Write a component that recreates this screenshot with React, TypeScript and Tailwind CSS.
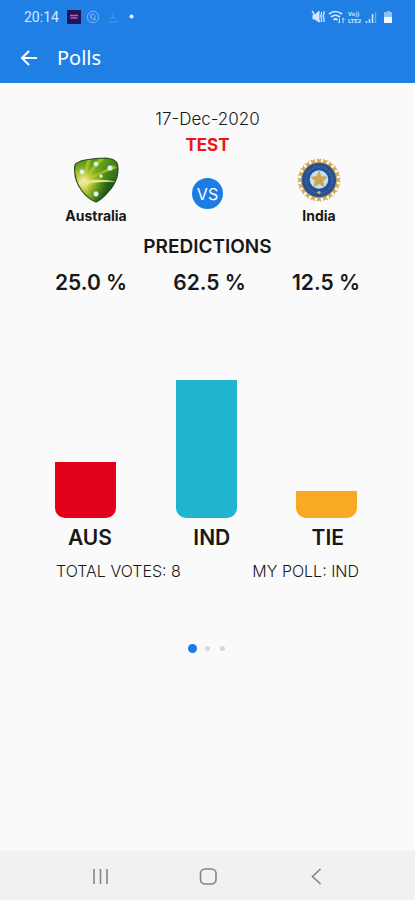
const results = [
  { team: "AUS", percent: "25.0 %", bar: "h-14 bg-[#e2001a]" },
  { team: "IND", percent: "62.5 %", bar: "h-[138px] bg-[#20b4ce]" },
  { team: "TIE", percent: "12.5 %", bar: "h-[27px] bg-[#f8aa24]" },
];

function AustraliaLogo() {
  return (
    <svg viewBox="0 0 44 46" className="h-[46px] w-[46px]" aria-hidden="true">
      <defs>
        <linearGradient id="shield" x1="0" y1="0.2" x2="1" y2="0.8">
          <stop offset="0" stopColor="#3f8a17" />
          <stop offset="0.45" stopColor="#5f9e16" />
          <stop offset="1" stopColor="#145019" />
        </linearGradient>
        <radialGradient id="glow" cx="0.22" cy="0.54" r="0.55">
          <stop offset="0" stopColor="#fffbd0" />
          <stop offset="0.35" stopColor="#d3d640" stopOpacity="0.8" />
          <stop offset="1" stopColor="#7fae1c" stopOpacity="0" />
        </radialGradient>
        <clipPath id="shieldClip">
          <path d="M1 8Q2 5 11 3Q22 1 32 1Q41 2 43 6Q45 12 43 20Q40 29 34 35Q28 42 22 45Q14 42 8 34Q-1 22 1 8Z" />
        </clipPath>
      </defs>
      <g clipPath="url(#shieldClip)">
        <path fill="url(#shield)" d="M0 0h44v46H0z" />
        <path fill="#c5d22f" opacity=".65" d="M9 24 13 1l5 0ZM9 24 26 0l5 1ZM9 24 40 8l3 3ZM9 24 0 10v4Z" />
        <path fill="#174f14" opacity=".6" d="M12 28q16-4 32-2v20H23Z" />
        <path fill="url(#glow)" d="M0 0h44v46H0z" />
        <path fill="#e7e88a" d="M1 26Q20 20 44 25Q20 24 3 29Z" />
      </g>
      <path fill="none" stroke="#294c22" strokeWidth="1.2" d="M1 8Q2 5 11 3Q22 1 32 1Q41 2 43 6Q45 12 43 20Q40 29 34 35Q28 42 22 45Q14 42 8 34Q-1 22 1 8Z" />
      <g fill="#e4f8ee" stroke="#a4d8b9" strokeWidth=".6">
        <circle cx="22" cy="7" r="2.3" />
        <circle cx="8" cy="15" r="2.4" />
        <circle cx="36" cy="11" r="2.5" />
        <circle cx="27" cy="19" r="1.5" />
        <circle cx="22" cy="37" r="2.4" />
      </g>
    </svg>
  );
}

function IndiaLogo() {
  const rays = Array.from({ length: 20 }, (_, i) => i * 18);
  return (
    <svg viewBox="0 0 46 46" className="h-[46px] w-[46px]" aria-hidden="true">
      {rays.map((angle) => (
        <path key={angle} transform={`rotate(${angle} 23 23)`} d="M20 7 21.5 4 20.5 1 23 2.5 26 1.5 24.5 4 26 7Z" fill="#d5a750" />
      ))}
      <circle cx="23" cy="23" r="17.5" fill="#294f91" stroke="#c8a35e" strokeWidth=".7" />
      <circle cx="23" cy="23" r="13.3" fill="none" stroke="#4b6ba3" strokeWidth="2" strokeDasharray="1 1.5" />
      <circle cx="23" cy="22.5" r="9.3" fill="#b8e7ef" />
      <path fill="#d2a353" stroke="#d2a353" strokeLinejoin="round" d="m23 14.5 2.2 5.2 5.6.5-4.2 3.7 1.2 5.5-4.8-2.9-4.8 2.9 1.2-5.5-4.2-3.7 5.6-.5Z" />
      <circle cx="23" cy="35.5" r="1.6" fill="#d8ae62" />
    </svg>
  );
}

function StatusBar() {
  return (
    <div className="flex h-[33px] items-center justify-between pl-6 pr-[22px] text-[#d4e8fb]">
      <div className="flex items-center">
        <span className="w-[37px] font-['Roboto',sans-serif] text-sm leading-5">20:14</span>
        <svg viewBox="0 0 72 16" className="ml-[6px] h-4 w-[72px]" fill="none" aria-hidden="true">
          <path fill="#231456" d="M0 1h14v14H0z" />
          <path stroke="#c05bbf" strokeWidth="1.5" d="M3 6.5h8M3.5 9h7" />
          <g stroke="#75b5f2">
            <circle cx="26" cy="8" r="5.7" />
            <path d="M23 5.5c1 4 3 5 6 5M24 9.5V6l2-1.5L28 7v2l-2 2.5" />
          </g>
          <path stroke="#479cec" d="M41 13h10M43 10l3-2V4m0 4 3 2" />
          <circle cx="64.5" cy="7.5" r="2" fill="#eff8ff" />
        </svg>
      </div>
      <svg viewBox="0 0 82 16" className="h-4 w-[82px]" fill="none" aria-hidden="true">
        <g stroke="currentColor">
          <path fill="currentColor" d="M2 6h2l4-4v11L4 10H2Z" />
          <path d="m1 2 8 11M10.500 3v2l-1 2 1 2v4M13 2v3l-1 2 1 2v4" strokeWidth="1.3" />
          <path d="M18 5q6-5 13 0M20 8q4-3.500 9 0M22.500 11q2-2 4 0" strokeWidth="1.7" />
          <path d="M28.500 14V9.500m0 4.500-1.500-1.500M32 9v5m0-5 1.500 1.500" />
        </g>
        <g fontSize="6" fontWeight="700" fill="currentColor" className="font-['Roboto',sans-serif]">
          <text x="37" y="7">Vo))</text>
          <text x="37" y="14">LTE2</text>
        </g>
        <path stroke="currentColor" strokeWidth="1.5" d="M55.500 14v-2m3 2v-4m3 4V5" />
        <path stroke="#64aaf0" strokeWidth="1.5" d="M64.500 14V3" />
        <path fill="#8dc1f3" d="M75 3h1V2h3v1h2v5h-8V3Z" />
        <path fill="#eff8ff" d="M73 8h8v6h-8Z" />
      </svg>
    </div>
  );
}

function NavBar() {
  return (
    <nav className="flex h-[49px] items-center justify-between bg-[#f1f1f1] px-[89px] text-[#858585]">
      <button type="button" aria-label="Recent apps">
        <svg viewBox="0 0 22 22" className="size-[22px]" stroke="currentColor" strokeWidth="1.6" fill="none">
          <path d="M5 4v15M11.500 4v15M18 4v15" />
        </svg>
      </button>
      <button type="button" aria-label="Home">
        <svg viewBox="0 0 22 22" className="size-[22px]" stroke="currentColor" strokeWidth="1.6" fill="none">
          <rect x="3.5" y="4" width="15.500" height="15" rx="4.500" />
        </svg>
      </button>
      <button type="button" aria-label="Back">
        <svg viewBox="0 0 22 22" className="size-[22px]" stroke="currentColor" strokeWidth="1.7" fill="none">
          <path d="m16.500 4-8 7.500 8 7.500" />
        </svg>
      </button>
    </nav>
  );
}

export default function App() {
  return (
    <div className="flex min-h-screen flex-col bg-[#fafafa] font-['Inter',sans-serif] text-[#181818]">
      <header className="bg-[#1f7fe5] text-white">
        <StatusBar />
        <div className="flex h-[50px] items-center pl-5">
          <button type="button" aria-label="Go back">
            <svg viewBox="0 0 18 18" className="size-[18px]" stroke="currentColor" strokeWidth="2" fill="none">
              <path d="M17 9H2m7-7L2 9l7 7" />
            </svg>
          </button>
          <h1 className="ml-[19px] font-['Noto_Sans',sans-serif] text-xl leading-6">Polls</h1>
        </div>
      </header>

      <main className="flex-1 pt-6">
        <div className="text-center">
          <p className="text-[17px] font-light leading-6">17-Dec-2020</p>
          <p className="mt-[2px] text-[17px] font-bold leading-6 text-[#ed1515]">TEST</p>
        </div>
        <div className="flex justify-between px-[65px]">
          <div className="flex w-[62px] flex-col items-center">
            <AustraliaLogo />
            <span className="mt-[3px] text-sm font-bold leading-5">Australia</span>
          </div>
          <div className="mt-[21px] flex size-[31px] items-center justify-center rounded-full bg-[#1b7ce5] text-base text-white">VS</div>
          <div className="flex w-[62px] flex-col items-center">
            <IndiaLogo />
            <span className="mt-[3px] text-sm font-bold leading-5">India</span>
          </div>
        </div>

        <h2 className="mt-[9px] text-center text-[19px] font-semibold leading-6">PREDICTIONS</h2>
        <div className="mt-3 flex justify-between px-[55px] text-[21px] font-semibold leading-6">
          {results.map(({ team, percent }) => (
            <span key={team}>{percent}</span>
          ))}
        </div>
        <div className="mt-[85px] flex h-[138px] items-end justify-between pl-[55px] pr-[58px]">
          {results.map(({ team, bar }) => (
            <div key={team} className={`w-[61px] rounded-b-[10px] ${bar}`} />
          ))}
        </div>
        <div className="mt-2 flex justify-between pl-[68px] pr-[71px] text-[21px] font-semibold leading-6">
          {results.map(({ team }) => (
            <span key={team}>{team}</span>
          ))}
        </div>
        <div className="mt-[9px] flex justify-between px-[56px] text-base font-light leading-6">
          <span>TOTAL VOTES: 8</span>
          <span>MY POLL: IND</span>
        </div>

        <div className="mt-[58px] flex justify-center">
          <button type="button" aria-label="Poll 1" className="flex size-[15px] items-center justify-center">
            <span className="size-[9px] rounded-full bg-[#1b7ce5]" />
          </button>
          <button type="button" aria-label="Poll 2" className="flex size-[15px] items-center justify-center">
            <span className="size-[5px] rounded-full bg-[#d8d8d8]" />
          </button>
          <button type="button" aria-label="Poll 3" className="flex size-[15px] items-center justify-center">
            <span className="size-[5px] rounded-full bg-[#d8d8d8]" />
          </button>
        </div>
      </main>
      <NavBar />
    </div>
  );
}
